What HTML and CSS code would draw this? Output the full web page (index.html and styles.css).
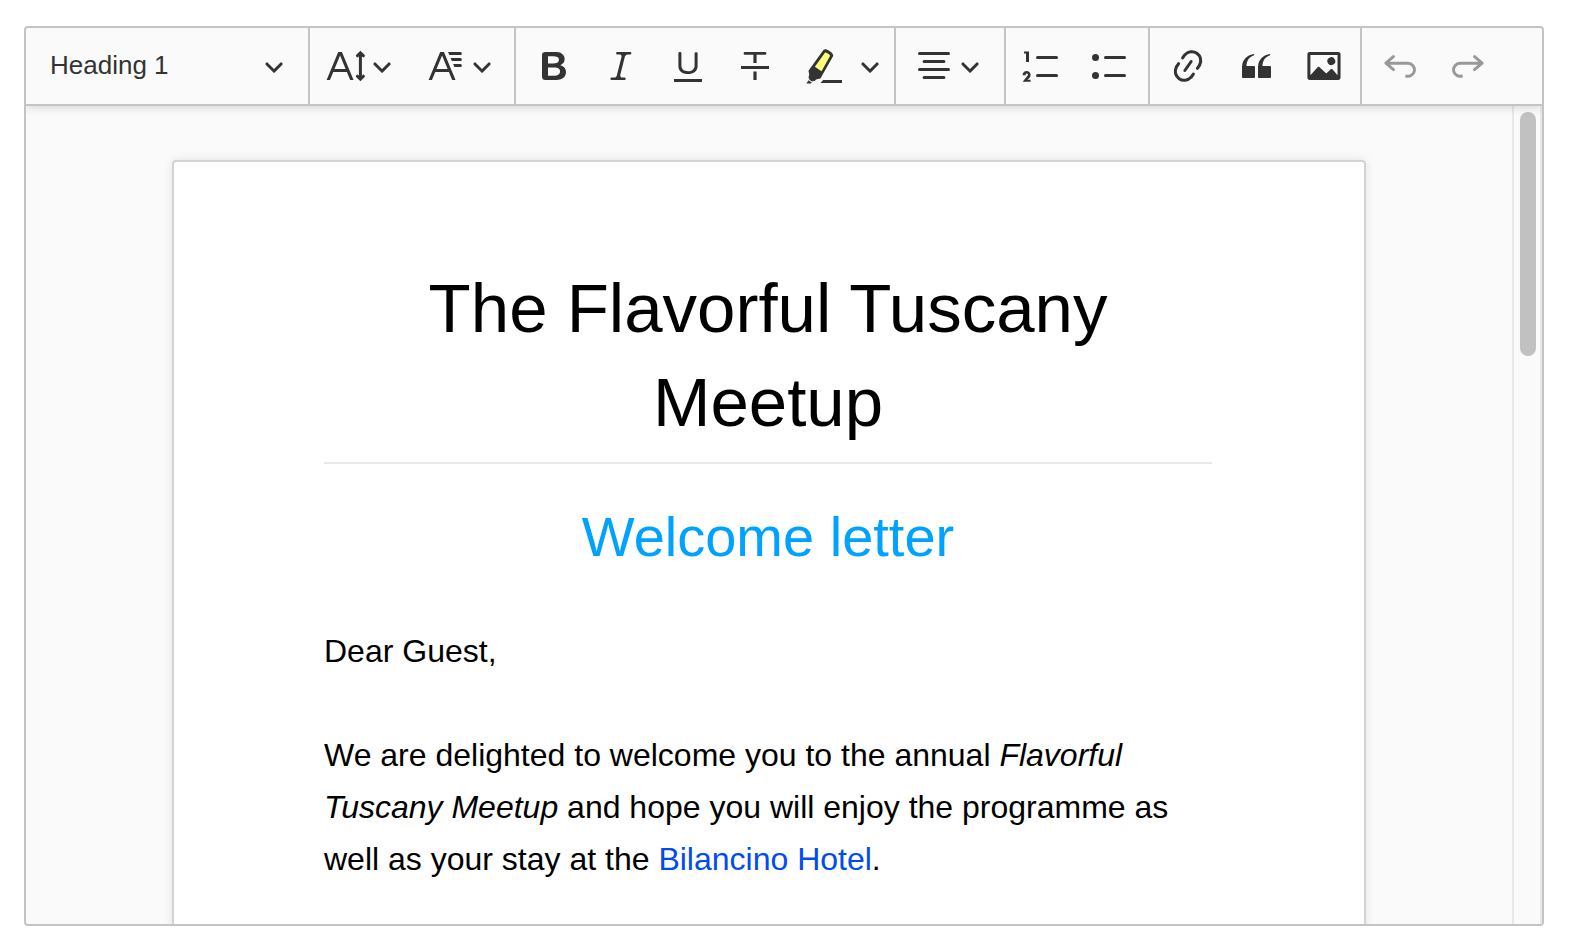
FILE: index.html
```html
<!DOCTYPE html>
<html lang="en">
<head>
<meta charset="utf-8">
<meta name="viewport" content="width=device-width, initial-scale=1">
<title>Document editor</title>
<link rel="stylesheet" href="styles.css">
</head>
<body>
<svg class="sprite" aria-hidden="true">
  <symbol id="chevron" viewBox="0 0 10 10"><path d="M.941 4.523a.75.75 0 1 1 1.06-1.06l3.006 3.005 3.005-3.005a.75.75 0 1 1 1.06 1.06l-3.549 3.55a.75.75 0 0 1-1.168-.136L.941 4.523z"/></symbol>
</svg>
<main class="editor">
  <div class="toolbar" role="toolbar" aria-label="Editor toolbar">
    <div class="group group-heading">
      <select class="heading-select" aria-label="Heading">
        <option>Heading 1</option>
        <option>Heading 2</option>
        <option>Paragraph</option>
      </select>
      <svg class="chevron" aria-hidden="true"><use href="#chevron"/></svg>
    </div>
    <div class="group group-font">
      <button class="tool dropdown" type="button" aria-label="Font size">
        <svg class="icon" viewBox="0 0 20 20"><path d="M9.816 11.5 7.038 4.785 4.261 11.5h5.555zm.62 1.5H3.641l-1.666 4.028H.312l5.789-14h1.875l5.789 14h-1.663L10.436 13z"/><path class="stroke" d="M17.2 3.8v12.5M15.7 4.9l1.5-1.5 1.5 1.5M15.7 15.1l1.5 1.5 1.5-1.5"/></svg>
        <svg class="chevron"><use href="#chevron"/></svg>
      </button>
      <button class="tool dropdown" type="button" aria-label="Font family">
        <svg class="icon" viewBox="0 0 20 20"><path d="M11.03 3h6.149a.75.75 0 1 1 0 1.5h-5.514L11.03 3zm1.27 3h4.879a.75.75 0 1 1 0 1.5h-4.244L12.3 6zm1.27 3h3.609a.75.75 0 1 1 0 1.5h-2.973L13.57 9zm-2.754 2.5L8.038 4.785 5.261 11.5h5.555zm.62 1.5H4.641l-1.666 4.028H1.312l5.789-14h1.875l5.789 14h-1.663L11.436 13z"/></svg>
        <svg class="chevron"><use href="#chevron"/></svg>
      </button>
    </div>
    <div class="group group-style">
      <button class="tool" type="button" aria-label="Bold">
        <svg class="icon" viewBox="0 0 20 20"><path d="M10.187 17H5.773c-.637 0-1.092-.138-1.364-.415-.273-.277-.409-.718-.409-1.323V4.738c0-.617.14-1.062.419-1.332.279-.27.73-.406 1.354-.406h4.68c.69 0 1.288.041 1.793.124.506.083.96.242 1.36.477.341.197.644.447.906.75a3.262 3.262 0 0 1 .808 2.162c0 1.401-.722 2.426-2.167 3.075C15.05 10.175 16 11.315 16 13.01a3.756 3.756 0 0 1-2.296 3.504 6.1 6.1 0 0 1-1.517.377c-.571.073-1.238.11-2 .11zm-.217-6.217H7v4.087h3.069c1.977 0 2.965-.69 2.965-2.072 0-.707-.256-1.22-.768-1.537-.512-.319-1.277-.478-2.296-.478zM7 5.13v3.619h2.606c.729 0 1.292-.067 1.69-.2a1.6 1.6 0 0 0 .91-.765c.165-.267.247-.566.247-.897 0-.707-.26-1.176-.778-1.409-.519-.232-1.31-.348-2.375-.348H7z"/></svg>
      </button>
      <button class="tool" type="button" aria-label="Italic">
        <svg class="icon" viewBox="0 0 20 20"><path d="m9.586 14.633.021.004c-.036.335.095.655.393.962.082.083.173.15.274.201h1.474a.6.6 0 1 1 0 1.2H5.304a.6.6 0 0 1 0-1.2h1.15c.474-.07.809-.182 1.005-.334.157-.122.291-.32.404-.597l2.416-9.55a1.053 1.053 0 0 0-.281-.823 1.12 1.12 0 0 0-.442-.296H8.15a.6.6 0 0 1 0-1.2h6.443a.6.6 0 1 1 0 1.2h-1.195c-.376.056-.65.155-.823.296-.215.175-.423.439-.623.79l-2.366 9.347z"/></svg>
      </button>
      <button class="tool" type="button" aria-label="Underline">
        <svg class="icon" viewBox="0 0 20 20"><path d="M3 18v-1.5h14V18zm2.2-8V3.6c0-.4.4-.6.8-.6.3 0 .7.2.7.6v6.2c0 2 1.3 2.8 3.2 2.8 1.9 0 3.4-.9 3.4-2.9V3.6c0-.3.4-.5.8-.5.3 0 .7.2.7.5V10c0 2.7-2.2 4-4.9 4-2.6 0-4.7-1.2-4.7-4z"/></svg>
      </button>
      <button class="tool" type="button" aria-label="Strikethrough">
        <svg class="icon" viewBox="0 0 20 20"><path d="M3 10h14v1.5H3zM9.2 12.7h1.6V17H9.2zM5 3h10a.7.7 0 0 1 0 1.4h-4.2v4.1H9.2V4.4H5A.7.7 0 0 1 5 3z"/></svg>
      </button>
      <div class="split">
        <button class="tool" type="button" aria-label="Highlight">
          <svg class="icon" viewBox="0 0 20 20"><path class="marker-ink" d="M10.798 1.59 3.002 12.875l1.895 1.852 2.521 1.402 6.997-12.194z"/><path d="m2.556 16.727.234-.348c-.297-.151-.462-.293-.498-.426-.036-.137.002-.416.115-.837.094-.25.15-.449.169-.595a4.495 4.495 0 0 0 0-.725c-.209-.621-.303-1.041-.284-1.26.02-.218.178-.506.475-.862l6.77-9.414c.539-.91 1.605-.85 3.199.18 1.594 1.032 2.188 1.928 1.784 2.686l-5.877 10.36c-.158.412-.333.673-.526.782-.193.108-.604.179-1.232.21-.362.131-.608.237-.738.318-.13.081-.305.238-.526.47-.293.265-.504.397-.632.397-.096 0-.27-.075-.524-.226l-.31.41-1.6-1.12zm-.279.415 1.575 1.103-.392.515H1.19l1.087-1.618zm8.1-13.656-4.953 6.9L8.75 12.57l4.247-7.574c.175-.25-.188-.647-1.092-1.192-.903-.546-1.412-.652-1.528-.32zM8.244 18.5 9.59 17h9.406v1.5H8.245z"/></svg>
        </button>
        <button class="tool" type="button" aria-label="Highlight options"><svg class="chevron"><use href="#chevron"/></svg></button>
      </div>
    </div>
    <div class="group group-align">
      <button class="tool dropdown" type="button" aria-label="Text alignment">
        <svg class="icon" viewBox="0 0 20 20"><path class="line" d="M2.75 3.75h14.5M5.04 7.75h9.92M2.75 11.75h14.5M5.04 15.75h9.92"/></svg>
        <svg class="chevron"><use href="#chevron"/></svg>
      </button>
    </div>
    <div class="group group-list">
      <button class="tool" type="button" aria-label="Numbered list">
        <svg class="icon" viewBox="0 0 20 20"><path class="line" d="M7.75 5.75h9.5M7.75 14.75h9.5"/><path d="M3.5 3v5H2V3.7H1v-1h2.5V3zM.343 17.857l2.59-3.257H2.92a.6.6 0 1 0-1.04 0H.302a2 2 0 1 1 3.995 0h-.001c-.048.405-.16.734-.333.988-.175.254-.59.692-1.244 1.312H4.3v1h-4l.043-.043z"/></svg>
      </button>
      <button class="tool" type="button" aria-label="Bulleted list">
        <svg class="icon" viewBox="0 0 20 20"><path class="line" d="M7.75 5.75h9.5M7.75 14.75h9.5"/><circle cx="2.75" cy="5.75" r="1.75"/><circle cx="2.75" cy="14.75" r="1.75"/></svg>
      </button>
    </div>
    <div class="group group-insert">
      <button class="tool" type="button" aria-label="Link">
        <svg class="icon" viewBox="0 0 20 20"><path d="m11.077 15 .991-1.416a.75.75 0 1 1 1.229.86l-1.148 1.64a.748.748 0 0 1-.217.206 5.251 5.251 0 0 1-8.503-5.955.741.741 0 0 1 .12-.274l1.147-1.639a.75.75 0 1 1 1.228.86L4.933 10.7l.006.003a3.75 3.75 0 0 0 6.132 4.294l.006.004zm5.494-5.335a.748.748 0 0 1-.12.274l-1.147 1.639a.75.75 0 1 1-1.228-.86l.86-1.23a3.75 3.75 0 0 0-6.144-4.301l-.86 1.229a.75.75 0 0 1-1.229-.86l1.148-1.64a.748.748 0 0 1 .217-.206 5.251 5.251 0 0 1 8.503 5.955zm-4.563-2.532a.75.75 0 0 1 .184 1.045l-3.155 4.505a.75.75 0 1 1-1.229-.86l3.155-4.506a.75.75 0 0 1 1.045-.184z"/></svg>
      </button>
      <button class="tool" type="button" aria-label="Block quote">
        <svg class="icon" viewBox="0 0 20 20"><path d="M3 10.423a6.5 6.5 0 0 1 6.056-6.408l.038.67C6.448 5.423 5.354 7.663 5.22 10H9c.552 0 .5.432.5.986v4.511c0 .554-.448.503-1 .503h-5c-.552 0-.5-.449-.5-1.003v-4.574zm8 0a6.5 6.5 0 0 1 6.056-6.408l.038.67c-2.646.739-3.74 2.979-3.873 5.315H17c.552 0 .5.432.5.986v4.511c0 .554-.448.503-1 .503h-5c-.552 0-.5-.449-.5-1.003v-4.574z"/></svg>
      </button>
      <button class="tool" type="button" aria-label="Insert image">
        <svg class="icon" viewBox="0 0 20 20"><path d="M6.91 10.54c.26-.23.64-.21.88.03l3.36 3.14 2.23-2.06a.64.64 0 0 1 .87 0l2.52 2.97V4.5H3.2v10.12l3.71-4.08zm10.27-7.51c.6 0 1.09.47 1.09 1.05v11.84c0 .59-.49 1.06-1.09 1.06H2.79c-.6 0-1.09-.47-1.09-1.06V4.08c0-.58.49-1.05 1.1-1.05h14.38zm-5.22 5.56a1.96 1.96 0 1 1 3.4-1.96 1.96 1.96 0 0 1-3.4 1.96z"/></svg>
      </button>
    </div>
    <div class="group group-history">
      <button class="tool" type="button" aria-label="Undo" disabled>
        <svg class="icon" viewBox="0 0 20 20"><path d="m5.042 9.367 2.189 1.837a.75.75 0 0 1-.965 1.149l-3.788-3.18a.747.747 0 0 1-.21-.284.75.75 0 0 1 .17-.945L6.23 4.762a.75.75 0 1 1 .964 1.15L4.863 7.866h8.917A.75.75 0 0 1 14 7.9a4 4 0 1 1-1.477 7.718l.344-1.489a2.5 2.5 0 1 0 1.094-4.73l.008-.032H5.042z"/></svg>
      </button>
      <button class="tool" type="button" aria-label="Redo" disabled>
        <svg class="icon" viewBox="0 0 20 20"><path d="m14.958 9.367-2.189 1.837a.75.75 0 0 0 .965 1.149l3.788-3.18a.747.747 0 0 0 .21-.284.75.75 0 0 0-.17-.945L13.77 4.762a.75.75 0 1 0-.964 1.15l2.331 1.954H6.22A.75.75 0 0 0 6 7.9a4 4 0 1 0 1.477 7.718l-.344-1.489A2.5 2.5 0 1 1 6.039 9.4l-.008-.032h8.927z"/></svg>
      </button>
    </div>
  </div>
  <div class="workspace">
    <div class="canvas">
      <article class="page">
        <h1>The Flavorful Tuscany Meetup</h1>
        <h2>Welcome letter</h2>
        <p>Dear Guest,</p>
        <p>We are delighted to welcome you to the annual <em>Flavorful Tuscany Meetup</em> and hope you will enjoy the programme as well as your stay at the <a href="#hotel">Bilancino Hotel</a>.</p>
      </article>
    </div>
    <div class="scrollbar" aria-hidden="true"><div class="thumb"></div></div>
  </div>
</main>
</body>
</html>
```
FILE: styles.css
```css
* { box-sizing: border-box; }

body {
  margin: 0;
  height: 100vh;
  padding: 26px 28px 24px 24px;
  background: #fff;
  font-family: "Liberation Sans", Arial, sans-serif;
}

.sprite { display: none; }

.editor {
  display: flex;
  flex-direction: column;
  height: 100%;
  border: 2px solid #c4c4c4;
  border-radius: 4px;
  background: #fafafa;
  overflow: hidden;
}

/* Toolbar */
.toolbar {
  display: flex;
  flex: none;
  height: 78px;
  border-bottom: 2px solid #c4c4c4;
  box-shadow: 0 0 10px rgba(0, 0, 0, 0.2);
  position: relative;
  z-index: 1;
}

.group {
  display: flex;
  align-items: center;
  flex: none;
  border-right: 2px solid #c4c4c4;
}

.group-heading { width: 284px; padding-right: 24px; }
.group-font { gap: 34px; padding: 0 22px 0 16px; }
.group-style { width: 380px; gap: 27px; padding: 0 14px 0 18px; }
.group-align { padding: 0 24px 0 18px; }
.group-list { gap: 28px; padding: 0 18px 0 16px; }
.group-insert { gap: 28px; padding: 0 16px 0 18px; }
.group-history { gap: 28px; padding-left: 18px; border-right: 0; }

.heading-select {
  appearance: none;
  flex: 1;
  height: 100%;
  margin: 0;
  padding: 0 0 2px 24px;
  border: 0;
  background: transparent;
  color: #333;
  font: 26px "Liberation Sans", Arial, sans-serif;
}

.tool {
  display: flex;
  align-items: center;
  padding: 0;
  border: 0;
  background: transparent;
  color: #333;
}

.tool:disabled { color: #999; }
.dropdown { gap: 6px; }
.split { display: flex; align-items: center; gap: 16px; margin-left: auto; }

.icon { width: 40px; height: 40px; fill: currentColor; }
.chevron { width: 20px; height: 20px; fill: #333; }

.line,
.stroke {
  fill: none;
  stroke: currentColor;
  stroke-width: 1.5;
  stroke-linecap: round;
}

.marker-ink { fill: #fdfd77; }

/* Document */
.workspace { display: flex; flex: 1; min-height: 0; }

.canvas {
  flex: 1;
  overflow: hidden;
  padding: 54px 146px 0;
}

.page {
  min-height: 1200px;
  padding: 100px 152px 100px 150px;
  border: 2px solid #d3d3d3;
  border-radius: 4px;
  background: #fff;
  box-shadow: 0 0 10px rgba(0, 0, 0, 0.1);
  color: #000;
}

h1 {
  margin: 0;
  padding-bottom: 12px;
  border-bottom: 2px solid #e8e8e8;
  font-size: 69px;
  font-weight: 400;
  line-height: 94px;
  text-align: center;
}

h2 {
  margin: 34px 0 49px;
  color: #00a2ff;
  font-size: 56px;
  font-weight: 400;
  line-height: 78px;
  text-align: center;
}

p {
  margin: 0 0 52px;
  font-size: 32px;
  line-height: 52px;
}

a { color: #004cf0; text-decoration: none; }

.scrollbar {
  flex: none;
  width: 30px;
  padding: 6px 4px 6px 6px;
  border: solid #e8e8e8;
  border-width: 0 2px;
}

.thumb {
  height: 244px;
  border-radius: 8px;
  background: #c1c1c1;
}
```
